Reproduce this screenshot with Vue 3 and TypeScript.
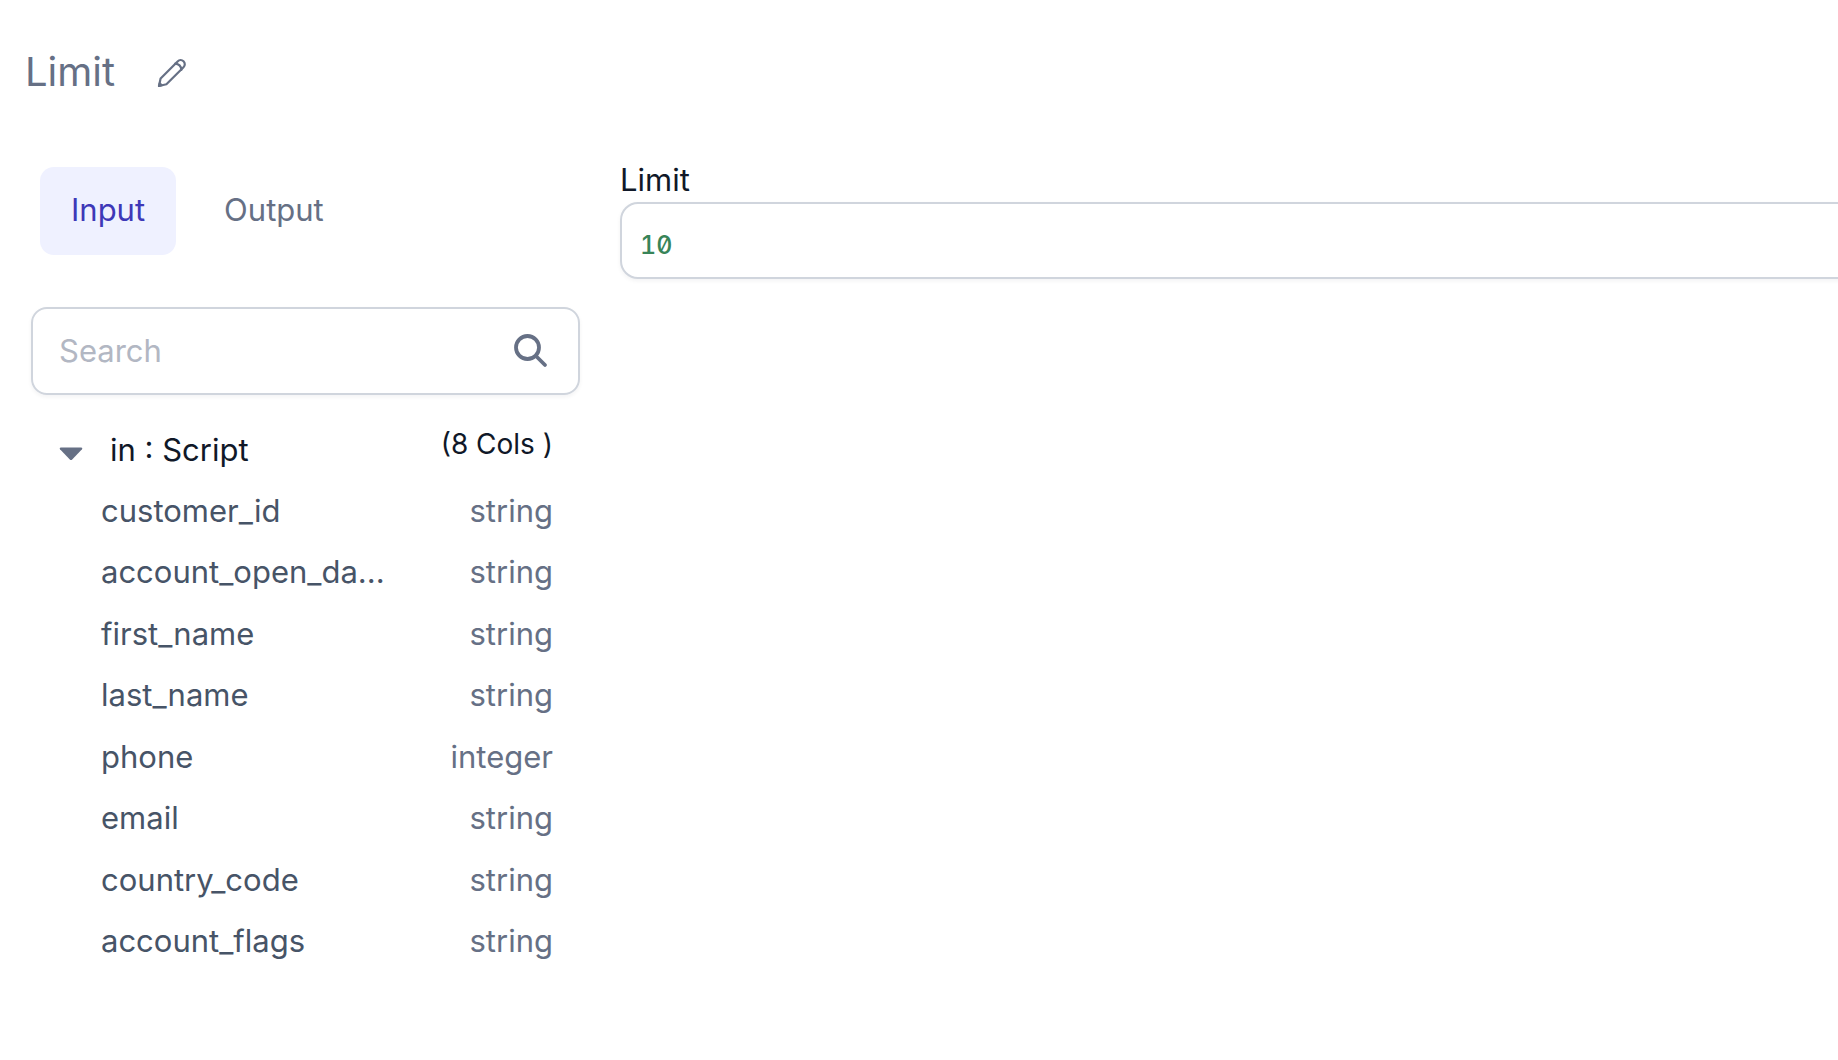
<script setup lang="ts">
import { computed, ref } from 'vue'

interface Column {
  name: string
  type: string
}

const columns: Column[] = [
  { name: 'customer_id', type: 'string' },
  { name: 'account_open_date', type: 'string' },
  { name: 'first_name', type: 'string' },
  { name: 'last_name', type: 'string' },
  { name: 'phone', type: 'integer' },
  { name: 'email', type: 'string' },
  { name: 'country_code', type: 'string' },
  { name: 'account_flags', type: 'string' },
]

const tabs = ['Input', 'Output']
const activeTab = ref('Input')
const search = ref('')
const limit = ref('10')
const expanded = ref(true)

const MAX_NAME = 15
const shorten = (name: string): string =>
  name.length > MAX_NAME ? `${name.slice(0, MAX_NAME)}...` : name

const visibleColumns = computed(() =>
  columns.filter((c) => c.name.includes(search.value.trim().toLowerCase())),
)
</script>

<template>
  <main class="page">
    <header class="header">
      <h1 class="title">Limit</h1>
      <button class="edit" type="button" aria-label="Edit name">
        <svg width="30" height="30" viewBox="0 0 30 30" fill="none" stroke="currentColor" stroke-width="2.2" stroke-linejoin="round" stroke-linecap="round">
          <path d="M2 28 3.600 20.600 20.600 3.400C22.300 1.700 24.800 1.600 26.500 3.300s1.700 4.300 0 6L9.400 26.200Z" />
          <path d="M18.300 5.700c3.300.300 5.700 2.700 6.100 6.100" />
          <path d="M2 28 2.700 25.300 4.700 27.300Z" fill="currentColor" />
        </svg>
      </button>
    </header>

    <div class="body">
      <aside class="sidebar">
        <nav class="tabs" role="tablist">
          <button
            v-for="tab in tabs"
            :key="tab"
            class="tab"
            :class="{ active: tab === activeTab }"
            type="button"
            role="tab"
            :aria-selected="tab === activeTab"
            @click="activeTab = tab"
          >{{ tab }}</button>
        </nav>

        <div class="search">
          <input v-model="search" class="search-input" type="text" placeholder="Search" aria-label="Search columns" />
          <svg class="search-icon" width="36" height="36" viewBox="0 0 36 36" fill="none" stroke="currentColor" stroke-width="3.8" stroke-linecap="round">
            <circle cx="14.500" cy="14.500" r="11.500" />
            <path d="M23 23 32 32" />
          </svg>
        </div>

        <section class="source">
          <div class="source-head">
            <button class="toggle" type="button" :aria-expanded="expanded" @click="expanded = !expanded">
              <svg class="caret" width="24" height="14" viewBox="0 0 24 14" fill="currentColor">
                <path d="M1.800 0.500h20.400c1 0 1.400 1 .8 1.700l-9.800 10.200c-.7.700-1.700.700-2.400 0L1 2.200C.400 1.500.800.500 1.800.500Z" />
              </svg>
              <span>in : Script</span>
            </button>
            <span class="count">(8 Cols )</span>
          </div>
          <table v-if="expanded" class="columns">
            <tbody>
              <tr v-for="column in visibleColumns" :key="column.name">
                <th scope="row">{{ shorten(column.name) }}</th>
                <td>{{ column.type }}</td>
              </tr>
            </tbody>
          </table>
        </section>
      </aside>

      <section class="form">
        <label class="label" for="limit">Limit</label>
        <input id="limit" v-model="limit" class="limit-input" type="text" />
      </section>
    </div>
  </main>
</template>

<style>
body {
  margin: 0;
  background: #fff;
}
</style>

<style scoped>
.page {
  font-family: Inter, "Liberation Sans", sans-serif;
  font-size: 31px;
  line-height: 40px;
  color: #101828;
  overflow: hidden;
}
button,
input {
  box-sizing: border-box;
  font: inherit;
  color: inherit;
}
button {
  border: 0;
  background: none;
  cursor: pointer;
}
.header {
  display: flex;
  align-items: center;
  gap: 38px;
  padding: 48px 25px 0;
  color: #667085;
}
.title {
  margin: 0;
  font-size: 40px;
  line-height: 48px;
  font-weight: 400;
}
.edit {
  display: flex;
  padding: 6px 4px 4px;
}
.body {
  display: flex;
  gap: 40px;
  padding: 64px 0 0 31px;
}
.sidebar {
  flex: 0 0 549px;
  min-width: 0;
}
.tabs {
  display: flex;
  gap: 17px;
  padding: 7px 9px 0;
}
.tab {
  height: 88px;
  padding: 0 31px 2px;
  border-radius: 14px;
  color: #667085;
}
.tab.active {
  background: #eff1ff;
  color: #3e38b8;
}
.search {
  display: flex;
  align-items: center;
  box-sizing: border-box;
  height: 88px;
  margin-top: 52px;
  padding: 0 29px 0 26px;
  border: 2px solid #d0d5dd;
  border-radius: 16px;
  box-shadow: 0 2px 4px rgba(16, 24, 40, 0.05);
}
.search-input {
  flex: 1;
  min-width: 0;
  padding: 0;
  border: 0;
  outline: 0;
  background: none;
}
.search-input::placeholder {
  color: #b2b7c3;
  opacity: 1;
}
.search-icon {
  flex: none;
  color: #667085;
}
.source {
  padding: 25px 27px 0 28px;
}
.source-head {
  display: flex;
  align-items: flex-start;
  justify-content: space-between;
}
.toggle {
  display: flex;
  align-items: center;
  gap: 27px;
  height: 60px;
  padding: 0;
}
.caret {
  margin-top: 8px;
  color: #667085;
}
.count {
  font-size: 28px;
  padding-top: 4px;
}
.columns {
  width: 100%;
  height: 492px;
  border-collapse: collapse;
}
.columns th,
.columns td {
  padding: 0;
  font-weight: 400;
}
.columns th {
  padding-left: 42px;
  text-align: left;
  color: #475467;
}
.columns td {
  text-align: right;
  color: #667085;
}
.form {
  flex: 1;
  min-width: 0;
}
.label {
  display: block;
}
.limit-input {
  display: block;
  width: calc(100% + 20px);
  height: 77px;
  margin-top: 2px;
  padding: 8px 18px 0;
  border: 2px solid #d0d5dd;
  border-radius: 18px;
  outline: 0;
  font-size: 25px;
  font-weight: 500;
  font-feature-settings: "tnum", "zero";
  color: #388458;
  box-shadow: 0 2px 4px rgba(16, 24, 40, 0.05);
}
</style>
